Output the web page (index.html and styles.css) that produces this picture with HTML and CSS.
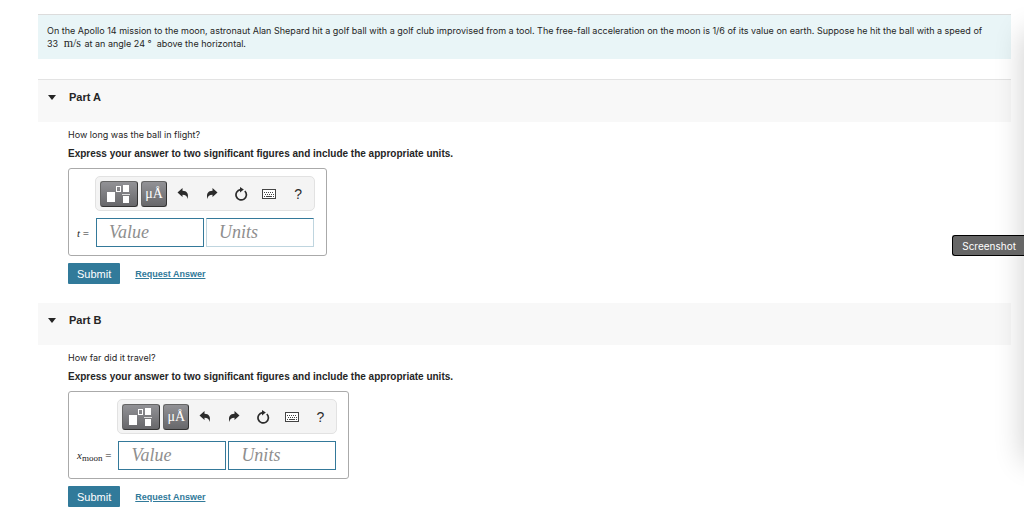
FILE: index.html
```html
<!DOCTYPE html>
<html lang="en">
<head>
    <meta charset="UTF-8">
    <meta name="viewport" content="width=device-width, initial-scale=1.0">
    <title>Golf on the Moon</title>
    <link rel="stylesheet" href="styles.css">
</head>
<body>
    <!-- shared icons -->
    <svg class="sprite" aria-hidden="true">
        <symbol id="icon-template" viewBox="0 0 26 20">
            <rect x="1" y="8" width="8" height="10" fill="#fff"/>
            <rect x="10.5" y="2.5" width="4" height="5" fill="none" stroke="#fff"/>
            <rect x="17" y="1" width="6" height="7" fill="#fff"/>
            <rect x="16" y="10" width="8" height="1" fill="#ddd"/>
            <rect x="17" y="12" width="6" height="7" fill="#fff"/>
        </symbol>
        <symbol id="icon-undo" viewBox="0 0 14 14">
            <path d="M1.500 5.500 6.500 1v2.700c4.500 0 6.500 3 5 8.300C11.200 9 9.500 7.700 6.500 7.700V10z" fill="#2b2b2b"/>
        </symbol>
        <symbol id="icon-redo" viewBox="0 0 14 14">
            <path d="M12.500 5.500 7.500 1v2.700C3 3.700 1 6.700 2.500 12 2.800 9 4.500 7.700 7.500 7.700V10z" fill="#2b2b2b"/>
        </symbol>
        <symbol id="icon-reset" viewBox="0 0 14 14">
            <path d="M10.800 4A5.200 5.200 0 1 1 6.500 2.600" fill="none" stroke="#2b2b2b" stroke-width="1.700"/>
            <path d="M6 0 9.800 2.600 6 5.400z" fill="#2b2b2b"/>
        </symbol>
        <symbol id="icon-keyboard" viewBox="0 0 16 10">
            <rect x="1.500" y="0.500" width="13" height="9" fill="#fff" stroke="#444"/>
            <path d="M3 3.500h10M4 5.500h9" stroke="#444" stroke-dasharray="1 1"/>
            <path d="M3 7.500h1M5 7.500h6M12 7.500h1" stroke="#444"/>
        </symbol>
    </svg>

    <main class="page">
        <div class="intro">
            On the Apollo 14 mission to the moon, astronaut Alan Shepard hit a golf ball with a golf club improvised from a tool. The free-fall acceleration on the moon is 1/6 of its value on earth. Suppose he hit the ball with a speed of <span class="quantity">33 <span class="unit">m/s</span></span> at an angle 24 ° &nbsp;above the horizontal.
        </div>

        <section class="part">
            <h2 class="part-header"><span class="arrow"></span>Part A</h2>
            <form class="part-body">
                <p class="question">How long was the ball in flight?</p>
                <p class="instructions">Express your answer to two significant figures and include the appropriate units.</p>
                <div class="answer-box">
                    <div class="toolbar">
                        <button type="button" class="tool dark wide" aria-label="Templates"><svg width="26" height="20"><use href="#icon-template"/></svg></button>
                        <button type="button" class="tool dark">μÅ</button>
                        <button type="button" class="tool" aria-label="Undo"><svg width="14" height="14"><use href="#icon-undo"/></svg></button>
                        <button type="button" class="tool" aria-label="Redo"><svg width="14" height="14"><use href="#icon-redo"/></svg></button>
                        <button type="button" class="tool" aria-label="Reset"><svg width="14" height="14"><use href="#icon-reset"/></svg></button>
                        <button type="button" class="tool" aria-label="Keyboard shortcuts"><svg width="16" height="10"><use href="#icon-keyboard"/></svg></button>
                        <button type="button" class="tool">?</button>
                    </div>
                    <label class="variable" for="valueA"><i>t</i> =</label>
                    <div class="fields">
                        <input type="text" id="valueA" placeholder="Value">
                        <input type="text" id="unitsA" placeholder="Units" aria-label="Units" class="pale">
                    </div>
                </div>
                <div class="actions">
                    <button type="submit" class="submit">Submit</button>
                    <a href="#" class="request">Request Answer</a>
                </div>
            </form>
        </section>

        <section class="part">
            <h2 class="part-header"><span class="arrow"></span>Part B</h2>
            <form class="part-body">
                <p class="question">How far did it travel?</p>
                <p class="instructions">Express your answer to two significant figures and include the appropriate units.</p>
                <div class="answer-box">
                    <div class="toolbar">
                        <button type="button" class="tool dark wide" aria-label="Templates"><svg width="26" height="20"><use href="#icon-template"/></svg></button>
                        <button type="button" class="tool dark">μÅ</button>
                        <button type="button" class="tool" aria-label="Undo"><svg width="14" height="14"><use href="#icon-undo"/></svg></button>
                        <button type="button" class="tool" aria-label="Redo"><svg width="14" height="14"><use href="#icon-redo"/></svg></button>
                        <button type="button" class="tool" aria-label="Reset"><svg width="14" height="14"><use href="#icon-reset"/></svg></button>
                        <button type="button" class="tool" aria-label="Keyboard shortcuts"><svg width="16" height="10"><use href="#icon-keyboard"/></svg></button>
                        <button type="button" class="tool">?</button>
                    </div>
                    <label class="variable" for="valueB"><i>x</i><sub>moon</sub> =</label>
                    <div class="fields">
                        <input type="text" id="valueB" placeholder="Value">
                        <input type="text" id="unitsB" placeholder="Units" aria-label="Units">
                    </div>
                </div>
                <div class="actions">
                    <button type="submit" class="submit">Submit</button>
                    <a href="#" class="request">Request Answer</a>
                </div>
            </form>
        </section>
    </main>

    <div class="edge-shadow"></div>
    <div class="tooltip">Screenshot</div>
</body>
</html>
```
FILE: styles.css
```css
* {
    box-sizing: border-box;
}
body {
    margin: 0;
    background: #fff;
    color: #252525;
    font-family: Inter, Arial, sans-serif;
    font-size: 9px;
    line-height: 12px;
    overflow-x: hidden;
}
.sprite {
    display: none;
}
.page {
    padding: 14px 13px 0 38px;
}
.intro {
    padding: 9px 10px 9px 9px;
    margin-bottom: 20px;
    background: #e9f5f7;
    border-top: 1px solid #dcdcdc;
    line-height: 13px;
}
.quantity {
    white-space: nowrap;
}
.unit {
    margin: 0 1px 0 3px;
    font-family: "Liberation Serif", serif;
    font-size: 12px;
    line-height: 1;
}

/* parts */
.part {
    margin-bottom: 19px;
}
.part-header {
    display: flex;
    align-items: center;
    gap: 13px;
    margin: 0;
    padding: 11px 10px 19px;
    background: #f8f8f8;
    border-top: 1px solid #e3e3e3;
    font-family: "Liberation Sans", Arial, sans-serif;
    font-size: 11px;
}
.part + .part .part-header {
    border-top: 0;
}
.arrow {
    border: 4px solid transparent;
    border-top: 5px solid #252525;
    border-bottom: 0;
}
.part-body {
    padding: 7px 30px 0;
}
.question {
    margin: 0 0 7px;
}
.instructions {
    margin: 0 0 8px;
    font-family: "Liberation Sans", Arial, sans-serif;
    font-size: 10px;
    font-weight: bold;
}

/* answer */
.answer-box {
    display: inline-grid;
    grid-template-columns: auto 220px;
    column-gap: 6px;
    row-gap: 7px;
    padding: 7px 11px 8px 8px;
    border: 1px solid #aaa;
    border-radius: 3px;
    vertical-align: top;
}
.toolbar {
    grid-column: 2;
    display: flex;
    align-items: center;
    gap: 3px;
    height: 35px;
    padding: 0 3px 0 4px;
    background: #f4f4f4;
    border: 1px solid #e2e2e2;
    border-radius: 5px;
}
.tool {
    display: flex;
    flex: 1;
    align-items: center;
    justify-content: center;
    height: 26px;
    padding: 0;
    background: none;
    border: 0;
    border-radius: 3px;
    color: #2b2b2b;
    font-family: "Liberation Sans", Arial, sans-serif;
    font-size: 14px;
    cursor: pointer;
}
.tool.dark {
    flex: none;
    width: 26px;
    background: linear-gradient(#929296, #67676a);
    border: 1px solid #666;
    border-right-color: #333;
    border-bottom-color: #333;
    color: #fff;
    font-family: "Liberation Serif", serif;
}
.tool.wide {
    width: 38px;
}
.variable {
    align-self: center;
    font-family: "Liberation Serif", serif;
    font-size: 11px;
    white-space: nowrap;
}
.variable sub {
    font-size: 9px;
    line-height: 1;
    vertical-align: -2px;
}
.fields {
    display: flex;
    gap: 2px;
    padding: 0 1px;
}
.fields input {
    flex: 1;
    min-width: 0;
    height: 29px;
    padding: 0 12px;
    background: #fff;
    border: 1px solid #34799a;
    border-radius: 0;
    font-family: "Liberation Serif", serif;
    font-size: 18px;
}
.fields input.pale {
    border-color: #34799a #bfd5df #bfd5df;
}
.fields input::placeholder {
    color: #8e8e8e;
    font-style: italic;
}

.actions {
    display: flex;
    align-items: center;
    gap: 15px;
    margin-top: 7px;
}
.submit {
    height: 21px;
    padding: 0 9px;
    background: #317a9a;
    border: 0;
    border-radius: 1px;
    color: #fff;
    font-family: "Liberation Sans", Arial, sans-serif;
    font-size: 11px;
    cursor: pointer;
}
.request {
    color: #317a9a;
    font-family: "Liberation Sans", Arial, sans-serif;
    font-weight: bold;
}

/* panel shadow at the right edge of the window */
.edge-shadow {
    position: fixed;
    top: 32px;
    bottom: 54px;
    left: 100%;
    width: 40px;
    box-shadow: 0 0 30px rgba(0, 0, 0, 0.2);
}
.tooltip {
    position: fixed;
    top: 235px;
    right: 0;
    padding: 4px 8px 3px 9px;
    background: #666;
    border: 1px solid #000;
    border-right: 0;
    border-radius: 3px 0 0 3px;
    color: #fff;
    font-size: 10px;
}
```
